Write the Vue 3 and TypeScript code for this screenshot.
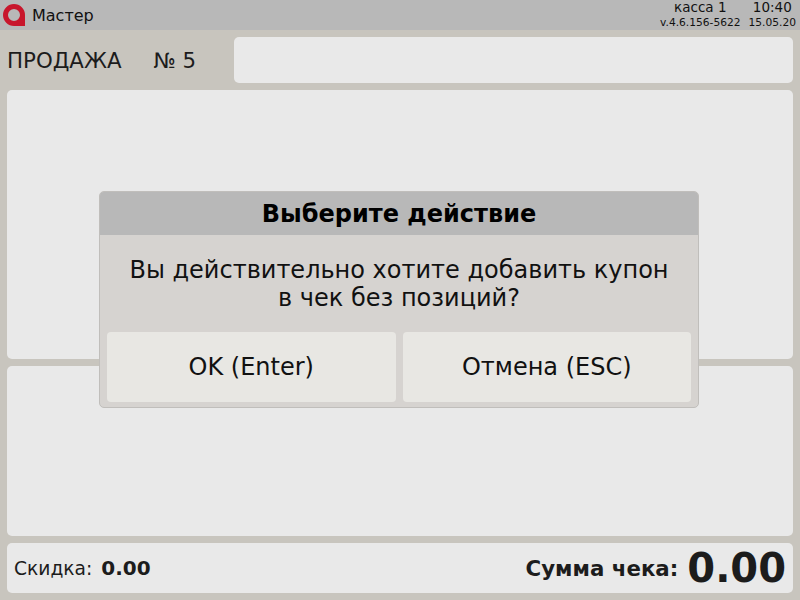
<template>
  <div class="screen">
    <header class="topbar">
      <svg class="logo" viewBox="0 0 22 22">
        <path
          class="logo-mark"
          fill-rule="evenodd"
          d="M11 0A11 11 0 0 1 22 11V22H11A11 11 0 0 1 11 0ZM11 5A6 6 0 1 0 11 17A6 6 0 1 0 11 5Z"
        />
      </svg>
      <span class="user">Мастер</span>
      <div class="info">
        <div class="info-col">
          <span class="info-main">касса 1</span>
          <span class="info-sub">v.4.6.156-5622</span>
        </div>
        <div class="info-col">
          <span class="info-main">10:40</span>
          <span class="info-sub">15.05.20</span>
        </div>
      </div>
    </header>

    <main class="content">
      <div class="sale-row">
        <div class="sale-title">
          <span>ПРОДАЖА</span>
          <span>№ 5</span>
        </div>
        <div class="panel sale-field"></div>
      </div>
      <div class="panel items"></div>
      <div class="panel details"></div>
      <div class="panel totals">
        <div class="discount">Скидка: <b>0.00</b></div>
        <div class="total">
          <b>Сумма чека:</b>
          <span class="total-value">{{ total }}</span>
        </div>
      </div>
    </main>

    <div class="dialog">
      <div class="dialog-title">Выберите действие</div>
      <div class="dialog-text">Вы действительно хотите добавить купон<br />в чек без позиций?</div>
      <div class="dialog-actions">
        <button v-for="action in actions" :key="action" class="dialog-btn">{{ action }}</button>
      </div>
    </div>
  </div>
</template>

<script setup lang="ts">
const total: string = '0.00'
const actions: string[] = ['OK (Enter)', 'Отмена (ESC)']
</script>

<style>
html,
body {
  margin: 0;
  overflow: hidden;
}
</style>

<style scoped>
.screen {
  position: relative;
  display: flex;
  flex-direction: column;
  width: 800px;
  height: 600px;
  background: #c8c5be;
  color: #1c1c1c;
  font-family: "DejaVu Sans", sans-serif;
}

.topbar {
  display: flex;
  align-items: center;
  height: 30px;
  padding: 0 4px 0 3px;
  background: #b8b8b8;
  box-sizing: border-box;
  color: #111;
}

.logo {
  width: 22px;
  height: 22px;
  margin-top: 0;
  margin-right: 7px;
}

.logo-mark {
  fill: #c8162c;
}

.user {
  font-size: 16px;
}

.info {
  display: flex;
  gap: 8px;
  margin-left: auto;
}

.info-col {
  display: flex;
  flex-direction: column;
  align-items: center;
}

.info-main {
  font-size: 13.5px;
  line-height: 15px;
}

.info-sub {
  font-size: 10.67px;
  line-height: 15px;
}

.content {
  display: flex;
  flex: 1;
  flex-direction: column;
  gap: 7px;
  padding: 7px;
}

.panel {
  background: #e9e9e9;
  border-radius: 5px;
}

.sale-row {
  display: flex;
  height: 46px;
}

.sale-title {
  display: flex;
  align-items: center;
  gap: 32px;
  width: 227px;
  font-size: 21.33px;
}

.sale-field {
  flex: 1;
}

.items {
  height: 269px;
}

.details {
  height: 170px;
}

.totals {
  display: flex;
  align-items: center;
  justify-content: space-between;
  height: 50px;
  padding: 0 7px;
  font-size: 18.67px;
}

.discount b {
  margin-left: 3px;
  font-size: 20px;
}

.total {
  display: flex;
  align-items: center;
  gap: 9px;
  font-size: 21.33px;
}

.total-value {
  font-size: 40px;
  font-weight: 700;
  line-height: 50px;
}

.dialog {
  position: absolute;
  top: 191px;
  left: 99px;
  display: flex;
  flex-direction: column;
  width: 600px;
  height: 217px;
  box-sizing: border-box;
  overflow: hidden;
  background: #d6d3d0;
  border: 1px solid #c0bebb;
  border-radius: 5px;
}

.dialog-title {
  height: 43px;
  background: #b8b8b8;
  color: #000;
  font-size: 24px;
  font-weight: 700;
  line-height: 45px;
  text-align: center;
}

.dialog-text {
  padding-top: 21px;
  color: #111;
  font-size: 24px;
  line-height: 28px;
  text-align: center;
}

.dialog-actions {
  display: grid;
  grid-template-columns: 1fr 1fr;
  gap: 7px;
  margin-top: auto;
  padding: 0 7px 5px;
}

.dialog-btn {
  height: 70px;
  padding: 0;
  background: #e8e7e3;
  border: none;
  border-radius: 4px;
  color: #111;
  font-family: inherit;
  font-size: 24px;
}
</style>
